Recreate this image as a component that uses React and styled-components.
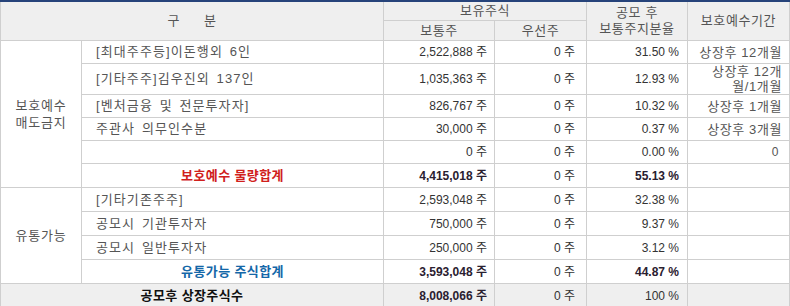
import React from "react";
import styled, { createGlobalStyle, css } from "styled-components";

const Global = createGlobalStyle`
  html, body { margin: 0; padding: 0; background: #fff; }
  body { font-family: "Liberation Sans", "Noto Sans CJK KR", sans-serif; }
`;

const Table = styled.table`
  width: 790px;
  table-layout: fixed;
  border-collapse: collapse;
  border-top: 2px solid #26437a;
  font-size: 13px;
  letter-spacing: 0.6px;
  line-height: 16px;
  color: #555;
`;

const Head = styled.th`
  background: #efefef;
  border: 1px solid #cfcfcf;
  border-top: 2px solid #26437a;
  font-weight: normal;
  color: #555;
  text-align: center;
  vertical-align: middle;
  padding: 0;
  height: ${(p) => p.$h || 18}px;
`;

const SubHead = styled(Head)`
  border-top: 1px solid #cfcfcf;
`;

const Spaced = styled.span`
  display: inline-flex;
  gap: 24px;
`;

const Row = styled.tr`
  height: ${(p) => p.$h || 23}px;
  background: ${(p) => (p.$grey ? "#efefef" : "#fff")};
`;

const Group = styled.td`
  border: 1px solid #cfcfcf;
  text-align: center;
  vertical-align: middle;
  padding: 0;
  color: #555;
  line-height: 17px;
  letter-spacing: 0.8px;
`;

const Label = styled.td`
  border: 1px solid #cfcfcf;
  padding: 0 0 0 14px;
  vertical-align: middle;
  color: #555;
  white-space: nowrap;
  letter-spacing: 1.1px;
  word-spacing: 2px;
`;

const Total = styled.td`
  border: 1px solid #cfcfcf;
  text-align: center;
  vertical-align: middle;
  padding: 0;
  font-weight: bold;
  letter-spacing: 0.4px;
  color: ${(p) => p.$color};
`;

const Num = styled.td`
  border: 1px solid #cfcfcf;
  text-align: right;
  vertical-align: middle;
  padding: 0 ${(p) => p.$pr ?? 7}px 0 0;
  color: #333;
  font-size: 12px;
  letter-spacing: 0;
  white-space: nowrap;
  ${(p) =>
    p.$bold &&
    css`
      font-weight: bold;
      color: #2a2030;
    `}
`;

const Period = styled.td`
  border: 1px solid #cfcfcf;
  text-align: right;
  vertical-align: middle;
  padding: 0 ${(p) => p.$pr ?? 7}px 0 0;
  color: #555;
  line-height: 15px;
  white-space: nowrap;
`;

const Zero = styled.span`
  padding-right: 3px;
  font-size: 12px;
`;

const data1 = [
  ["[최대주주등]이돈행외 6인", "2,522,888 주", "31.50 %", <>상장후 12개월</>, 23],
  ["[기타주주]김우진외 137인", "1,035,363 주", "12.93 %", <>상장후 12개<br />월/1개월</>, 29],
  ["[벤처금융 및 전문투자자]", "826,767 주", "10.32 %", <>상장후 1개월</>, 23],
  ["주관사 의무인수분", "30,000 주", "0.37 %", <>상장후 3개월</>, 23],
  ["", "0 주", "0.00 %", <Zero>0</Zero>, 23],
];

const data2 = [
  ["[기타기존주주]", "2,593,048 주", "32.38 %"],
  ["공모시 기관투자자", "750,000 주", "9.37 %"],
  ["공모시 일반투자자", "250,000 주", "3.12 %"],
];

export default function App() {
  return (
    <>
      <Global />
      <Table>
        <colgroup>
          <col style={{ width: 81 }} />
          <col style={{ width: 302 }} />
          <col style={{ width: 111 }} />
          <col style={{ width: 92 }} />
          <col style={{ width: 101 }} />
          <col style={{ width: 102 }} />
        </colgroup>
        <thead>
          <tr>
            <Head colSpan={2} rowSpan={2}>
              <Spaced>
                <span>구</span>
                <span>분</span>
              </Spaced>
            </Head>
            <Head colSpan={2} $h={18}>보유주식</Head>
            <Head rowSpan={2}>
              공모 후
              <br />
              보통주지분율
            </Head>
            <Head rowSpan={2}>보호예수기간</Head>
          </tr>
          <tr>
            <SubHead $h={19}>보통주</SubHead>
            <SubHead $h={19}>우선주</SubHead>
          </tr>
        </thead>
        <tbody>
          {data1.map(([label, n, pct, period, h], i) => (
            <Row key={i} $h={h}>
              {i === 0 && (
                <Group rowSpan={6}>
                  보호예수
                  <br />
                  매도금지
                </Group>
              )}
              <Label>{label}</Label>
              <Num>{n}</Num>
              <Num $pr={11}>0 주</Num>
              <Num $pr={8}>{pct}</Num>
              <Period>{period}</Period>
            </Row>
          ))}
          <Row $h={24}>
            <Total $color="#d0201c">보호예수 물량합계</Total>
            <Num $bold>4,415,018 주</Num>
            <Num $pr={11}>0 주</Num>
            <Num $bold $pr={8}>55.13 %</Num>
            <Period />
          </Row>
          {data2.map(([label, n, pct], i) => (
            <Row key={i} $h={24}>
              {i === 0 && <Group rowSpan={4}>유통가능</Group>}
              <Label>{label}</Label>
              <Num>{n}</Num>
              <Num $pr={11}>0 주</Num>
              <Num $pr={8}>{pct}</Num>
              <Period />
            </Row>
          ))}
          <Row $h={24}>
            <Total $color="#1467a8">유통가능 주식합계</Total>
            <Num $bold>3,593,048 주</Num>
            <Num $pr={11}>0 주</Num>
            <Num $bold $pr={8}>44.87 %</Num>
            <Period />
          </Row>
          <Row $h={24} $grey>
            <Total colSpan={2} $color="#111">공모후 상장주식수</Total>
            <Num $bold>8,008,066 주</Num>
            <Num $pr={11}>0 주</Num>
            <Num $pr={8}>100 %</Num>
            <Period />
          </Row>
        </tbody>
      </Table>
    </>
  );
}
